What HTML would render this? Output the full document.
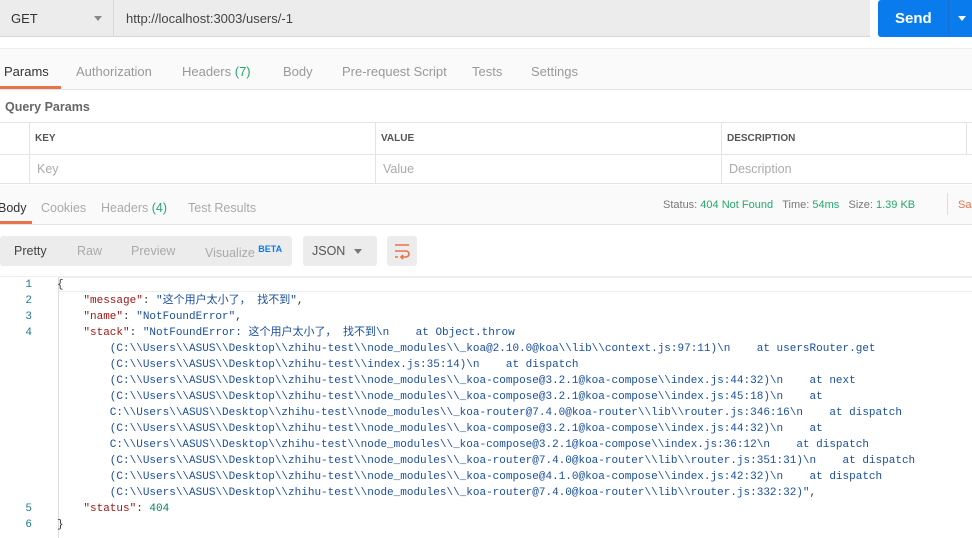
<!DOCTYPE html>
<html><head><meta charset="utf-8"><style>
*{margin:0;padding:0;box-sizing:border-box}
body{width:972px;height:538px;overflow:hidden;background:#fff;font-family:"Liberation Sans","Noto Sans CJK SC",sans-serif;font-size:12.5px;color:#808080;position:relative}
.a{position:absolute}
.code{font-family:"Liberation Mono","Noto Sans CJK SC",monospace;font-size:11px;white-space:pre;line-height:16px}
.k{color:#a31515}.s{color:#1a4fa0}.n{color:#098658}.p{color:#333}
.ln{color:#237893;text-align:right;width:32px}
</style></head><body>
<div class="a" style="left:0;top:0;width:870px;height:37px;background:#ececec;border-bottom:1px solid #d6d6d6"></div>
<div class="a" style="left:113px;top:0;width:1px;height:37px;background:#d8d8d8"></div>
<div class="a" style="left:11px;top:11px;color:#333;font-size:13px">GET</div>
<div class="a" style="left:94px;top:16px;border-left:4px solid transparent;border-right:4px solid transparent;border-top:5px solid #888"></div>
<div class="a" style="left:126px;top:11px;color:#444;font-size:13px">http://localhost:3003/users/-1</div>
<div class="a" style="left:878px;top:0;width:94px;height:37px;background:#097bed;border-radius:3px 0 0 3px"></div>
<div class="a" style="left:948px;top:0;width:1px;height:37px;background:#1a6fd0"></div>
<div class="a" style="left:895px;top:10px;color:#fff;font-size:15px;font-weight:bold">Send</div>
<div class="a" style="left:958px;top:16px;border-left:4px solid transparent;border-right:4px solid transparent;border-top:5px solid #fff"></div>
<div class="a" style="left:0;top:48px;width:972px;height:42px;background:#fafafa;border-top:1px solid #eee;border-bottom:1px solid #e4e4e4"></div>
<div class="a" style="left:4px;top:64px;color:#333;font-size:13px">Params</div>
<div class="a" style="left:0;top:86px;width:61px;height:3px;background:#e8734a"></div>
<div class="a" style="left:76px;top:64px;font-size:13px;color:#999">Authorization</div>
<div class="a" style="left:182px;top:64px;font-size:13px;color:#999">Headers <span style="color:#26a86e">(7)</span></div>
<div class="a" style="left:283px;top:64px;font-size:13px;color:#999">Body</div>
<div class="a" style="left:342px;top:64px;font-size:13px;color:#999">Pre-request Script</div>
<div class="a" style="left:472px;top:64px;font-size:13px;color:#999">Tests</div>
<div class="a" style="left:531px;top:64px;font-size:13px;color:#999">Settings</div>
<div class="a" style="left:5px;top:100px;color:#666;font-weight:bold;font-size:12.5px">Query Params</div>
<div class="a" style="left:0;top:122px;width:972px;height:62px;border-top:1px solid #e4e4e4;border-bottom:1px solid #e4e4e4"></div>
<div class="a" style="left:0;top:154px;width:972px;height:1px;background:#e4e4e4"></div>
<div class="a" style="left:29px;top:122px;width:1px;height:62px;background:#e4e4e4"></div>
<div class="a" style="left:375px;top:122px;width:1px;height:62px;background:#e4e4e4"></div>
<div class="a" style="left:721px;top:122px;width:1px;height:62px;background:#e4e4e4"></div>
<div class="a" style="left:966px;top:122px;width:1px;height:32px;background:#e4e4e4"></div>
<div class="a" style="left:35px;top:133px;font-size:10px;font-weight:bold;color:#555">KEY</div>
<div class="a" style="left:381px;top:133px;font-size:10px;font-weight:bold;color:#555">VALUE</div>
<div class="a" style="left:727px;top:133px;font-size:10px;font-weight:bold;color:#555">DESCRIPTION</div>
<div class="a" style="left:37px;top:162px;color:#aaa">Key</div>
<div class="a" style="left:383px;top:162px;color:#aaa">Value</div>
<div class="a" style="left:729px;top:162px;color:#aaa">Description</div>
<div class="a" style="left:0;top:185px;width:972px;height:40px;background:#fafafa;border-bottom:1px solid #e4e4e4"></div>
<div class="a" style="left:-2px;top:201px;color:#333;font-size:12.5px">Body</div>
<div class="a" style="left:0;top:221px;width:32px;height:3px;background:#e8734a"></div>
<div class="a" style="left:41px;top:201px;color:#aaa">Cookies</div>
<div class="a" style="left:101px;top:201px;color:#aaa">Headers <span style="color:#26a86e">(4)</span></div>
<div class="a" style="left:188px;top:201px;color:#aaa">Test Results</div>
<div class="a" style="left:663px;top:199px;font-size:11px;color:#777">Status: <span style="color:#26a86e">404 Not Found</span>&nbsp;&nbsp;&nbsp;Time: <span style="color:#26a86e">54ms</span>&nbsp;&nbsp;&nbsp;Size: <span style="color:#26a86e">1.39 KB</span></div>
<div class="a" style="left:947px;top:193px;width:1px;height:22px;background:#ddd"></div>
<div class="a" style="left:958px;top:199px;font-size:11px;color:#e8734a">Sa</div>
<div class="a" style="left:0;top:236px;width:292px;height:30px;background:#ececec;border-radius:3px"></div>
<div class="a" style="left:14px;top:244px;color:#444">Pretty</div>
<div class="a" style="left:77px;top:244px;color:#aaa">Raw</div>
<div class="a" style="left:131px;top:244px;color:#aaa">Preview</div>
<div class="a" style="left:205px;top:244px;color:#aaa">Visualize <sup style="color:#097bed;font-size:9px;font-weight:bold">BETA</sup></div>
<div class="a" style="left:303px;top:236px;width:74px;height:30px;background:#ececec;border-radius:3px"></div>
<div class="a" style="left:312px;top:244px;color:#555">JSON</div>
<div class="a" style="left:354px;top:249px;border-left:4px solid transparent;border-right:4px solid transparent;border-top:5px solid #777"></div>
<div class="a" style="left:387px;top:236px;width:30px;height:30px;background:#ececec;border-radius:3px"></div>
<svg class="a" style="left:393px;top:242px" width="18" height="18" viewBox="0 0 18 18" fill="none" stroke="#e8734a" stroke-width="1.6"><path d="M2 3h14M2 9h11a3 3 0 0 1 0 6H8M10 13l-2 2 2 2M2 15h3"/></svg>
<div class="a" style="left:0;top:276px;width:972px;height:1px;background:#eee"></div>
<div class="a" style="left:58px;top:277px;width:1px;height:261px;background:#ddd"></div>
<div class="a" style="left:59px;top:277px;width:913px;height:15px;border-top:1px solid #eee;border-bottom:1px solid #eee"></div>
<div class="a code ln" style="left:0;top:277px;">1
2
3
4
 
 
 
 
 
 
 
 
 
 
5
6</div>
<div class="a code" style="left:57px;top:277px;color:#1a4fa0"><span class="p">{</span>
    <span class="k">"message"</span><span class="p">: </span>"这个用户太小了， 找不到"<span class="p">,</span>
    <span class="k">"name"</span><span class="p">: </span>"NotFoundError"<span class="p">,</span>
    <span class="k">"stack"</span><span class="p">: </span>"NotFoundError: 这个用户太小了， 找不到\n    at Object.throw
        (C:\\Users\\ASUS\\Desktop\\zhihu-test\\node_modules\\_koa@2.10.0@koa\\lib\\context.js:97:11)\n    at usersRouter.get
        (C:\\Users\\ASUS\\Desktop\\zhihu-test\\index.js:35:14)\n    at dispatch
        (C:\\Users\\ASUS\\Desktop\\zhihu-test\\node_modules\\_koa-compose@3.2.1@koa-compose\\index.js:44:32)\n    at next
        (C:\\Users\\ASUS\\Desktop\\zhihu-test\\node_modules\\_koa-compose@3.2.1@koa-compose\\index.js:45:18)\n    at
        C:\\Users\\ASUS\\Desktop\\zhihu-test\\node_modules\\_koa-router@7.4.0@koa-router\\lib\\router.js:346:16\n    at dispatch
        (C:\\Users\\ASUS\\Desktop\\zhihu-test\\node_modules\\_koa-compose@3.2.1@koa-compose\\index.js:44:32)\n    at
        C:\\Users\\ASUS\\Desktop\\zhihu-test\\node_modules\\_koa-compose@3.2.1@koa-compose\\index.js:36:12\n    at dispatch
        (C:\\Users\\ASUS\\Desktop\\zhihu-test\\node_modules\\_koa-router@7.4.0@koa-router\\lib\\router.js:351:31)\n    at dispatch
        (C:\\Users\\ASUS\\Desktop\\zhihu-test\\node_modules\\_koa-compose@4.1.0@koa-compose\\index.js:42:32)\n    at dispatch
        (C:\\Users\\ASUS\\Desktop\\zhihu-test\\node_modules\\_koa-router@7.4.0@koa-router\\lib\\router.js:332:32)"<span class="p">,</span>
    <span class="k">"status"</span><span class="p">: </span><span class="n">404</span>
<span class="p">}</span></div>
</body></html>
